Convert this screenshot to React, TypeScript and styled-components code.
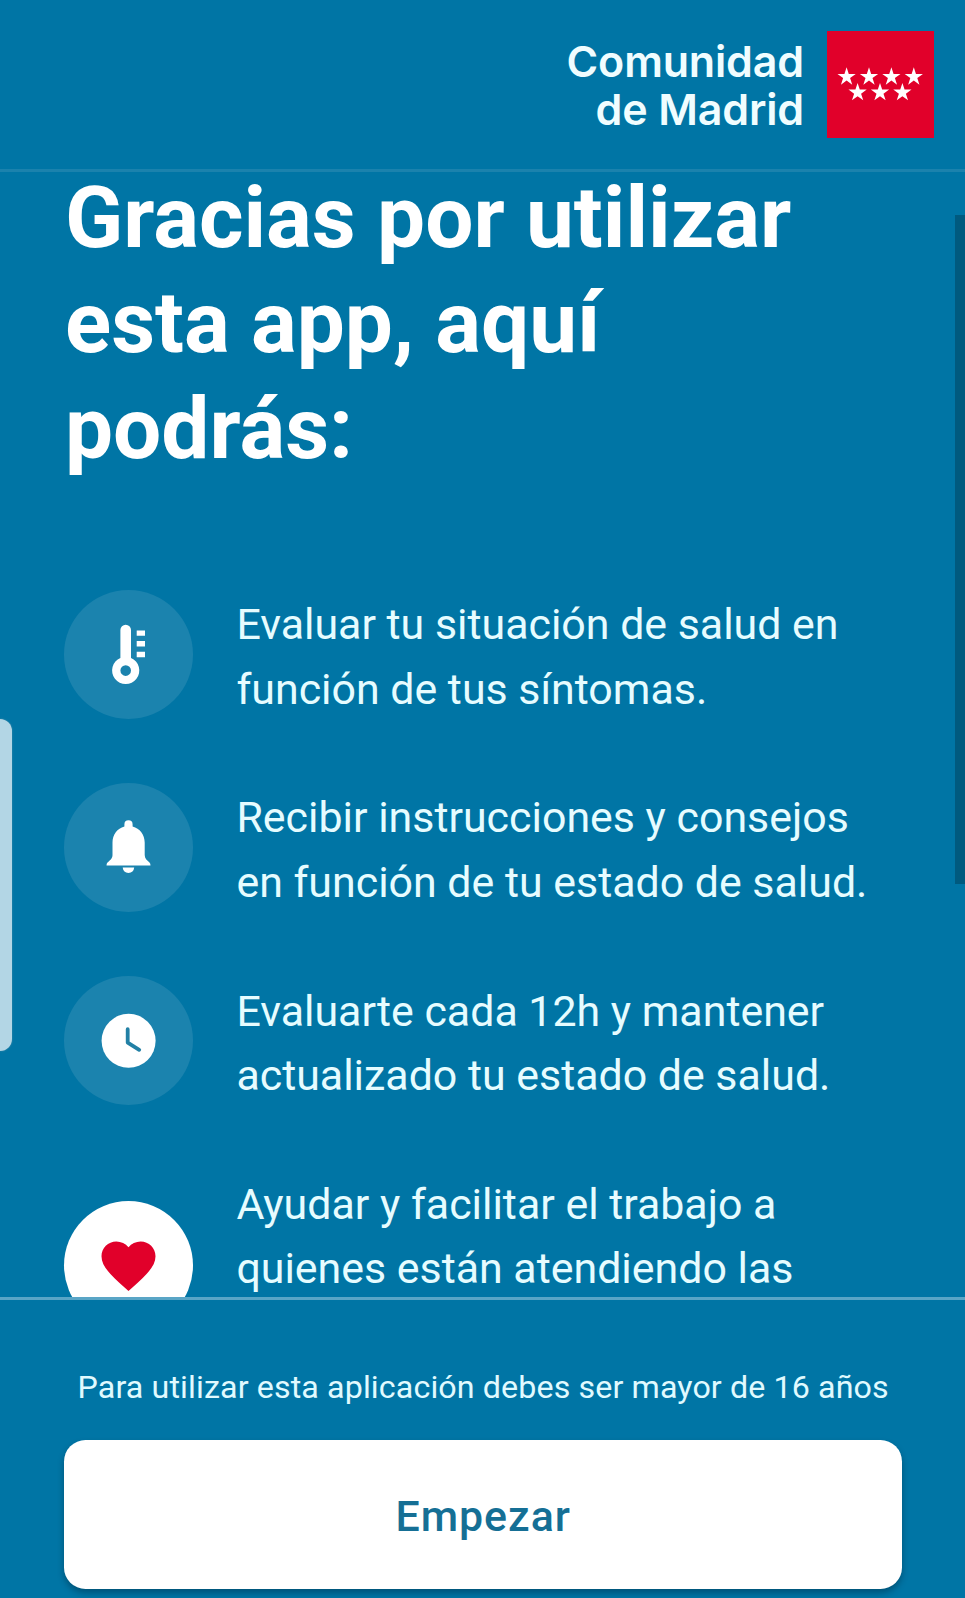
import React from 'react';
import styled, { createGlobalStyle } from 'styled-components';

const GlobalStyle = createGlobalStyle`
  * { box-sizing: border-box; }
  body { margin: 0; background: #0075a5; }
`;

const Screen = styled.div`
  position: relative;
  display: flex;
  flex-direction: column;
  width: 965px;
  height: 1598px;
  overflow: hidden;
  background: #0075a5;
  color: #fff;
  font-family: Roboto, 'Liberation Sans', sans-serif;
`;

const Header = styled.header`
  display: flex;
  flex: none;
  justify-content: flex-end;
  align-items: flex-start;
  gap: 23px;
  height: 172px;
  padding: 31px 31px 0 0;
  border-bottom: 3px solid #1b82ad;
`;

const BrandName = styled.div`
  padding-top: 6px;
  font-family: Inter, sans-serif;
  font-size: 43px;
  font-weight: 600;
  line-height: 48px;
  letter-spacing: -0.16px;
  text-align: right;
  white-space: nowrap;
  color: #f0fdff;
`;

const Flag = styled.svg`
  display: block;
  width: 107px;
  height: 107px;
  background: #e1002a;
`;

const Content = styled.main`
  flex: 1;
  min-height: 0;
  margin-top: -10px;
  overflow: hidden;
  padding: 4px 64px 0 64.4px;
`;

const Title = styled.h1`
  margin: 0 0 107.6px;
  padding-left: 0.6px;
  font-size: 85.5px;
  font-weight: 700;
  line-height: 105.4px;
  white-space: nowrap;
`;

const Features = styled.ul`
  display: flex;
  flex-direction: column;
  gap: 64.4px;
  margin: 0;
  padding: 0;
  list-style: none;
`;

const Feature = styled.li<{ $lines: number }>`
  display: flex;
  align-items: center;
  gap: 43px;
  height: ${({ $lines }) => $lines * 64.4}px;
`;

const Badge = styled.div<{ $solid?: boolean }>`
  flex: none;
  width: 129px;
  height: 129px;
  border-radius: 50%;
  background: ${({ $solid }) => ($solid ? '#fff' : '#1b83ae')};

  svg { display: block; width: 129px; height: 129px; }
`;

const FeatureText = styled.p`
  align-self: flex-start;
  margin: 0;
  padding-top: 2.4px;
  font-size: 42.9px;
  line-height: 64.4px;
  white-space: nowrap;
  color: #e6fcff;
`;

const Footer = styled.footer`
  display: flex;
  flex: none;
  flex-direction: column;
  height: 301px;
  padding: 63px 63px 0 64.4px;
  border-top: 3px solid #59a5c6;
`;

const Notice = styled.p`
  margin: 0 0 28.6px;
  font-size: 32.2px;
  line-height: 48px;
  letter-spacing: 0.12px;
  text-align: center;
  white-space: nowrap;
  color: #e0faff;
`;

const StartButton = styled.button`
  height: 149.4px;
  padding: 3px 0 0;
  border: 0;
  border-radius: 21.5px;
  background: #fff;
  box-shadow: 0 4px 6px rgba(0, 35, 55, 0.4);
  color: #156f95;
  font-family: inherit;
  font-size: 42.9px;
  font-weight: 500;
  letter-spacing: 1px;
`;

const ScrollThumb = styled.div`
  position: absolute;
  top: 215px;
  right: 0;
  width: 10px;
  height: 669px;
  background: #005a7f;
`;

const EdgeHandle = styled.div`
  position: absolute;
  top: 719px;
  left: 0;
  width: 12px;
  height: 332px;
  border-radius: 0 12px 12px 0;
  background: #b3d6e5;
  box-shadow: 0 0 2px #4d91ad;
`;

const STARS: [number, number][] = [
  [19.6, 45.9], [42, 45.9], [64.4, 45.9], [86.8, 45.9],
  [30.6, 61.5], [53, 61.5], [75.4, 61.5],
];

const starPoints = (cx: number, cy: number, r: number) =>
  Array.from({ length: 10 }, (_, i) => {
    const radius = i % 2 ? r * 0.382 : r;
    const angle = (i * Math.PI) / 5 - Math.PI / 2;
    return `${(cx + radius * Math.cos(angle)).toFixed(2)},${(cy + radius * Math.sin(angle)).toFixed(2)}`;
  }).join(' ');

const Thermometer = () => (
  <svg viewBox="0 0 129 129" fill="#fff">
    <path
      fillRule="evenodd"
      d="M56.4 40.1a5.3 5.3 0 0 1 10.6 0V68a13.6 13.6 0 1 1-10.6 0ZM61.7 75.3a5.3 5.3 0 1 0 0 10.6a5.3 5.3 0 0 0 0-10.6Z"
    />
    <path d="M72.7 40.4h8.3v5.4h-8.3zM72.7 51.1h8.3v5.4h-8.3zM72.7 61.8h8.3v5.4h-8.3z" />
  </svg>
);

const Bell = () => (
  <svg viewBox="0 0 129 129" fill="#fff">
    <path d="M60.4 43.4V41.4a4.1 4.1 0 0 1 8.2 0v2C75.8 45.2 80.7 51.6 80.7 59.5V72C80.7 75.5 82.8 77.2 85.5 79.5Q86.5 80.6 86.5 82.4H42.5Q42.5 80.6 43.5 79.5C46.2 77.2 48.5 75.5 48.5 72V59.5C48.5 51.6 53.3 45.2 60.4 43.4Z" />
    <path d="M58.7 84.5H70.2A5.8 6.2 0 0 1 58.7 84.5Z" />
  </svg>
);

const Clock = () => (
  <svg viewBox="0 0 129 129">
    <circle cx="64.6" cy="64.8" r="27" fill="#fff" />
    <path
      d="M63.7 53.2V66.6L75.2 73.8"
      fill="none"
      stroke="#2280a5"
      strokeWidth="3.8"
      strokeLinecap="round"
      strokeLinejoin="round"
    />
  </svg>
);

const Heart = () => (
  <svg viewBox="0 0 129 129">
    <path
      transform="translate(32.1 32.4) scale(2.7)"
      fill="#e1002a"
      d="M12 21.35l-1.45-1.32C5.4 15.36 2 12.28 2 8.5 2 5.42 4.42 3 7.5 3c1.74 0 3.41.81 4.5 2.09C13.09 3.81 14.76 3 16.5 3 19.58 3 22 5.42 22 8.5c0 3.78-3.4 6.86-8.55 11.54L12 21.35z"
    />
  </svg>
);

const FEATURES = [
  { icon: <Thermometer />, rows: 2, text: ['Evaluar tu situación de salud en', 'función de tus síntomas.'] },
  { icon: <Bell />, rows: 2, text: ['Recibir instrucciones y consejos', 'en función de tu estado de salud.'] },
  { icon: <Clock />, rows: 2, text: ['Evaluarte cada 12h y mantener', 'actualizado tu estado de salud.'] },
  { icon: <Heart />, rows: 3, solid: true, text: ['Ayudar y facilitar el trabajo a', 'quienes están atendiendo las'] },
];

export default function App() {
  return (
    <Screen>
      <GlobalStyle />
      <Header>
        <BrandName>
          Comunidad
          <br />
          de Madrid
        </BrandName>
        <Flag viewBox="0 0 107 107" fill="#fff">
          {STARS.map(([x, y]) => (
            <polygon key={`${x}-${y}`} points={starPoints(x, y, 9.6)} />
          ))}
        </Flag>
      </Header>
      <Content>
        <Title>
          Gracias por utilizar
          <br />
          esta app, aquí
          <br />
          podrás:
        </Title>
        <Features>
          {FEATURES.map(({ icon, rows, solid, text }) => (
            <Feature key={text[0]} $lines={rows}>
              <Badge $solid={solid}>{icon}</Badge>
              <FeatureText>
                {text[0]}
                <br />
                {text[1]}
              </FeatureText>
            </Feature>
          ))}
        </Features>
      </Content>
      <Footer>
        <Notice>Para utilizar esta aplicación debes ser mayor de 16 años</Notice>
        <StartButton type="button">Empezar</StartButton>
      </Footer>
      <ScrollThumb />
      <EdgeHandle />
    </Screen>
  );
}
